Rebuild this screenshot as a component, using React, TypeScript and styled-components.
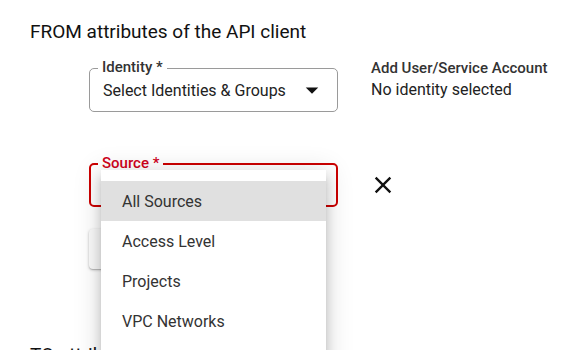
import styled, { createGlobalStyle } from 'styled-components';

const GlobalStyle = createGlobalStyle`
  html, body {
    margin: 0;
    padding: 0;
    background: #ffffff;
    overflow: hidden;
  }
  body {
    font-family: Roboto, "Liberation Sans", Arial, sans-serif;
    color: #212121;
  }
`;

const Page = styled.div`
  width: 587px;
  height: 350px;
  padding: 20px 0 0 30px;
  box-sizing: border-box;
  overflow: hidden;
`;

const SectionHeading = styled.h2<{ gap?: number }>`
  margin: ${({ gap }) => gap ?? 0}px 0 0;
  font-size: 19px;
  line-height: 24px;
  font-weight: 400;
  color: #111;
  white-space: nowrap;
`;

const FieldRow = styled.div<{ gap: number }>`
  display: flex;
  align-items: center;
  margin: ${({ gap }) => gap}px 0 0 59px;
`;

const OutlinedBox = styled.div<{ error?: boolean }>`
  position: relative;
  display: flex;
  align-items: center;
  justify-content: space-between;
  box-sizing: border-box;
  width: 249px;
  height: 44px;
  padding: 0 10px 0 13px;
  border: ${({ error }) => (error ? '2px solid #cc0000' : '1px solid #9a9a9a')};
  border-radius: 5px;
`;

const FloatingLabel = styled.span<{ error?: boolean }>`
  position: absolute;
  top: -11px;
  left: ${({ error }) => (error ? 7 : 8)}px;
  padding: 0 4px;
  background: #ffffff;
  font-size: 15px;
  line-height: 18px;
  font-weight: 500;
  color: ${({ error }) => (error ? '#d0021b' : '#333')};
`;

const SelectValue = styled.span`
  font-size: 16px;
  color: #222;
  white-space: nowrap;
`;

const InfoColumn = styled.div`
  display: flex;
  flex-direction: column;
  gap: 3px;
  align-self: flex-start;
  margin: -9px 0 0 33px;
`;

const InfoLabel = styled.span`
  font-size: 15px;
  line-height: 18px;
  font-weight: 500;
  color: #333;
  white-space: nowrap;
`;

const InfoValue = styled.span`
  font-size: 16px;
  line-height: 20px;
  color: #222;
  white-space: nowrap;
`;

const CloseButton = styled.button`
  display: flex;
  align-items: center;
  justify-content: center;
  margin-left: 31px;
  padding: 0;
  border: none;
  background: none;
  color: #111;
`;

const AddButton = styled.button`
  display: block;
  width: 150px;
  height: 40px;
  margin: 22px 0 0 59px;
  border: none;
  border-radius: 4px;
  background: #fafafa;
  box-shadow: 0 1px 3px rgba(0, 0, 0, 0.25), 0 1px 1px rgba(0, 0, 0, 0.14);
  font-family: inherit;
  font-size: 14px;
  color: #1a73e8;
`;

const Menu = styled.ul`
  position: absolute;
  top: 5px;
  left: 10px;
  z-index: 10;
  width: 225px;
  margin: 0;
  padding: 11px 0 8px;
  list-style: none;
  background: #ffffff;
  box-shadow: 0 5px 5px -3px rgba(0, 0, 0, 0.2), 0 8px 10px 1px rgba(0, 0, 0, 0.14),
    0 3px 24px 4px rgba(0, 0, 0, 0.12);
`;

const MenuItem = styled.li<{ selected?: boolean }>`
  display: flex;
  align-items: center;
  height: 40px;
  padding-left: 21px;
  font-size: 16px;
  color: #333;
  background: ${({ selected }) => (selected ? '#e0e0e0' : 'transparent')};
  white-space: nowrap;
`;

const sources = ['All Sources', 'Access Level', 'Projects', 'VPC Networks', 'Service Accounts'];

const ArrowDropDown = () => (
  <svg width="30" height="30" viewBox="0 0 24 24" fill="#111">
    <path d="M7 10l5 5 5-5z" />
  </svg>
);

const CloseIcon = () => (
  <svg width="28" height="28" viewBox="0 0 24 24" fill="currentColor">
    <path d="M19 6.41 17.59 5 12 10.59 6.41 5 5 6.41 10.59 12 5 17.59 6.41 19 12 13.41 17.59 19 19 17.59 13.41 12z" />
  </svg>
);

const App = () => {
  return (
    <Page>
      <GlobalStyle />
      <SectionHeading>FROM attributes of the API client</SectionHeading>

      <FieldRow gap={24}>
        <OutlinedBox>
          <FloatingLabel>Identity *</FloatingLabel>
          <SelectValue>Select Identities &amp; Groups</SelectValue>
          <ArrowDropDown />
        </OutlinedBox>
        <InfoColumn>
          <InfoLabel>Add User/Service Account</InfoLabel>
          <InfoValue>No identity selected</InfoValue>
        </InfoColumn>
      </FieldRow>

      <FieldRow gap={51}>
        <OutlinedBox error>
          <FloatingLabel error>Source *</FloatingLabel>
          <Menu>
            {sources.map((s, i) => (
              <MenuItem key={s} selected={i === 0}>
                {s}
              </MenuItem>
            ))}
          </Menu>
        </OutlinedBox>
        <CloseButton aria-label="Remove">
          <CloseIcon />
        </CloseButton>
      </FieldRow>

      <AddButton>Add Source</AddButton>

      <SectionHeading gap={74}>TO attributes of resources</SectionHeading>
    </Page>
  );
};

export default App;
